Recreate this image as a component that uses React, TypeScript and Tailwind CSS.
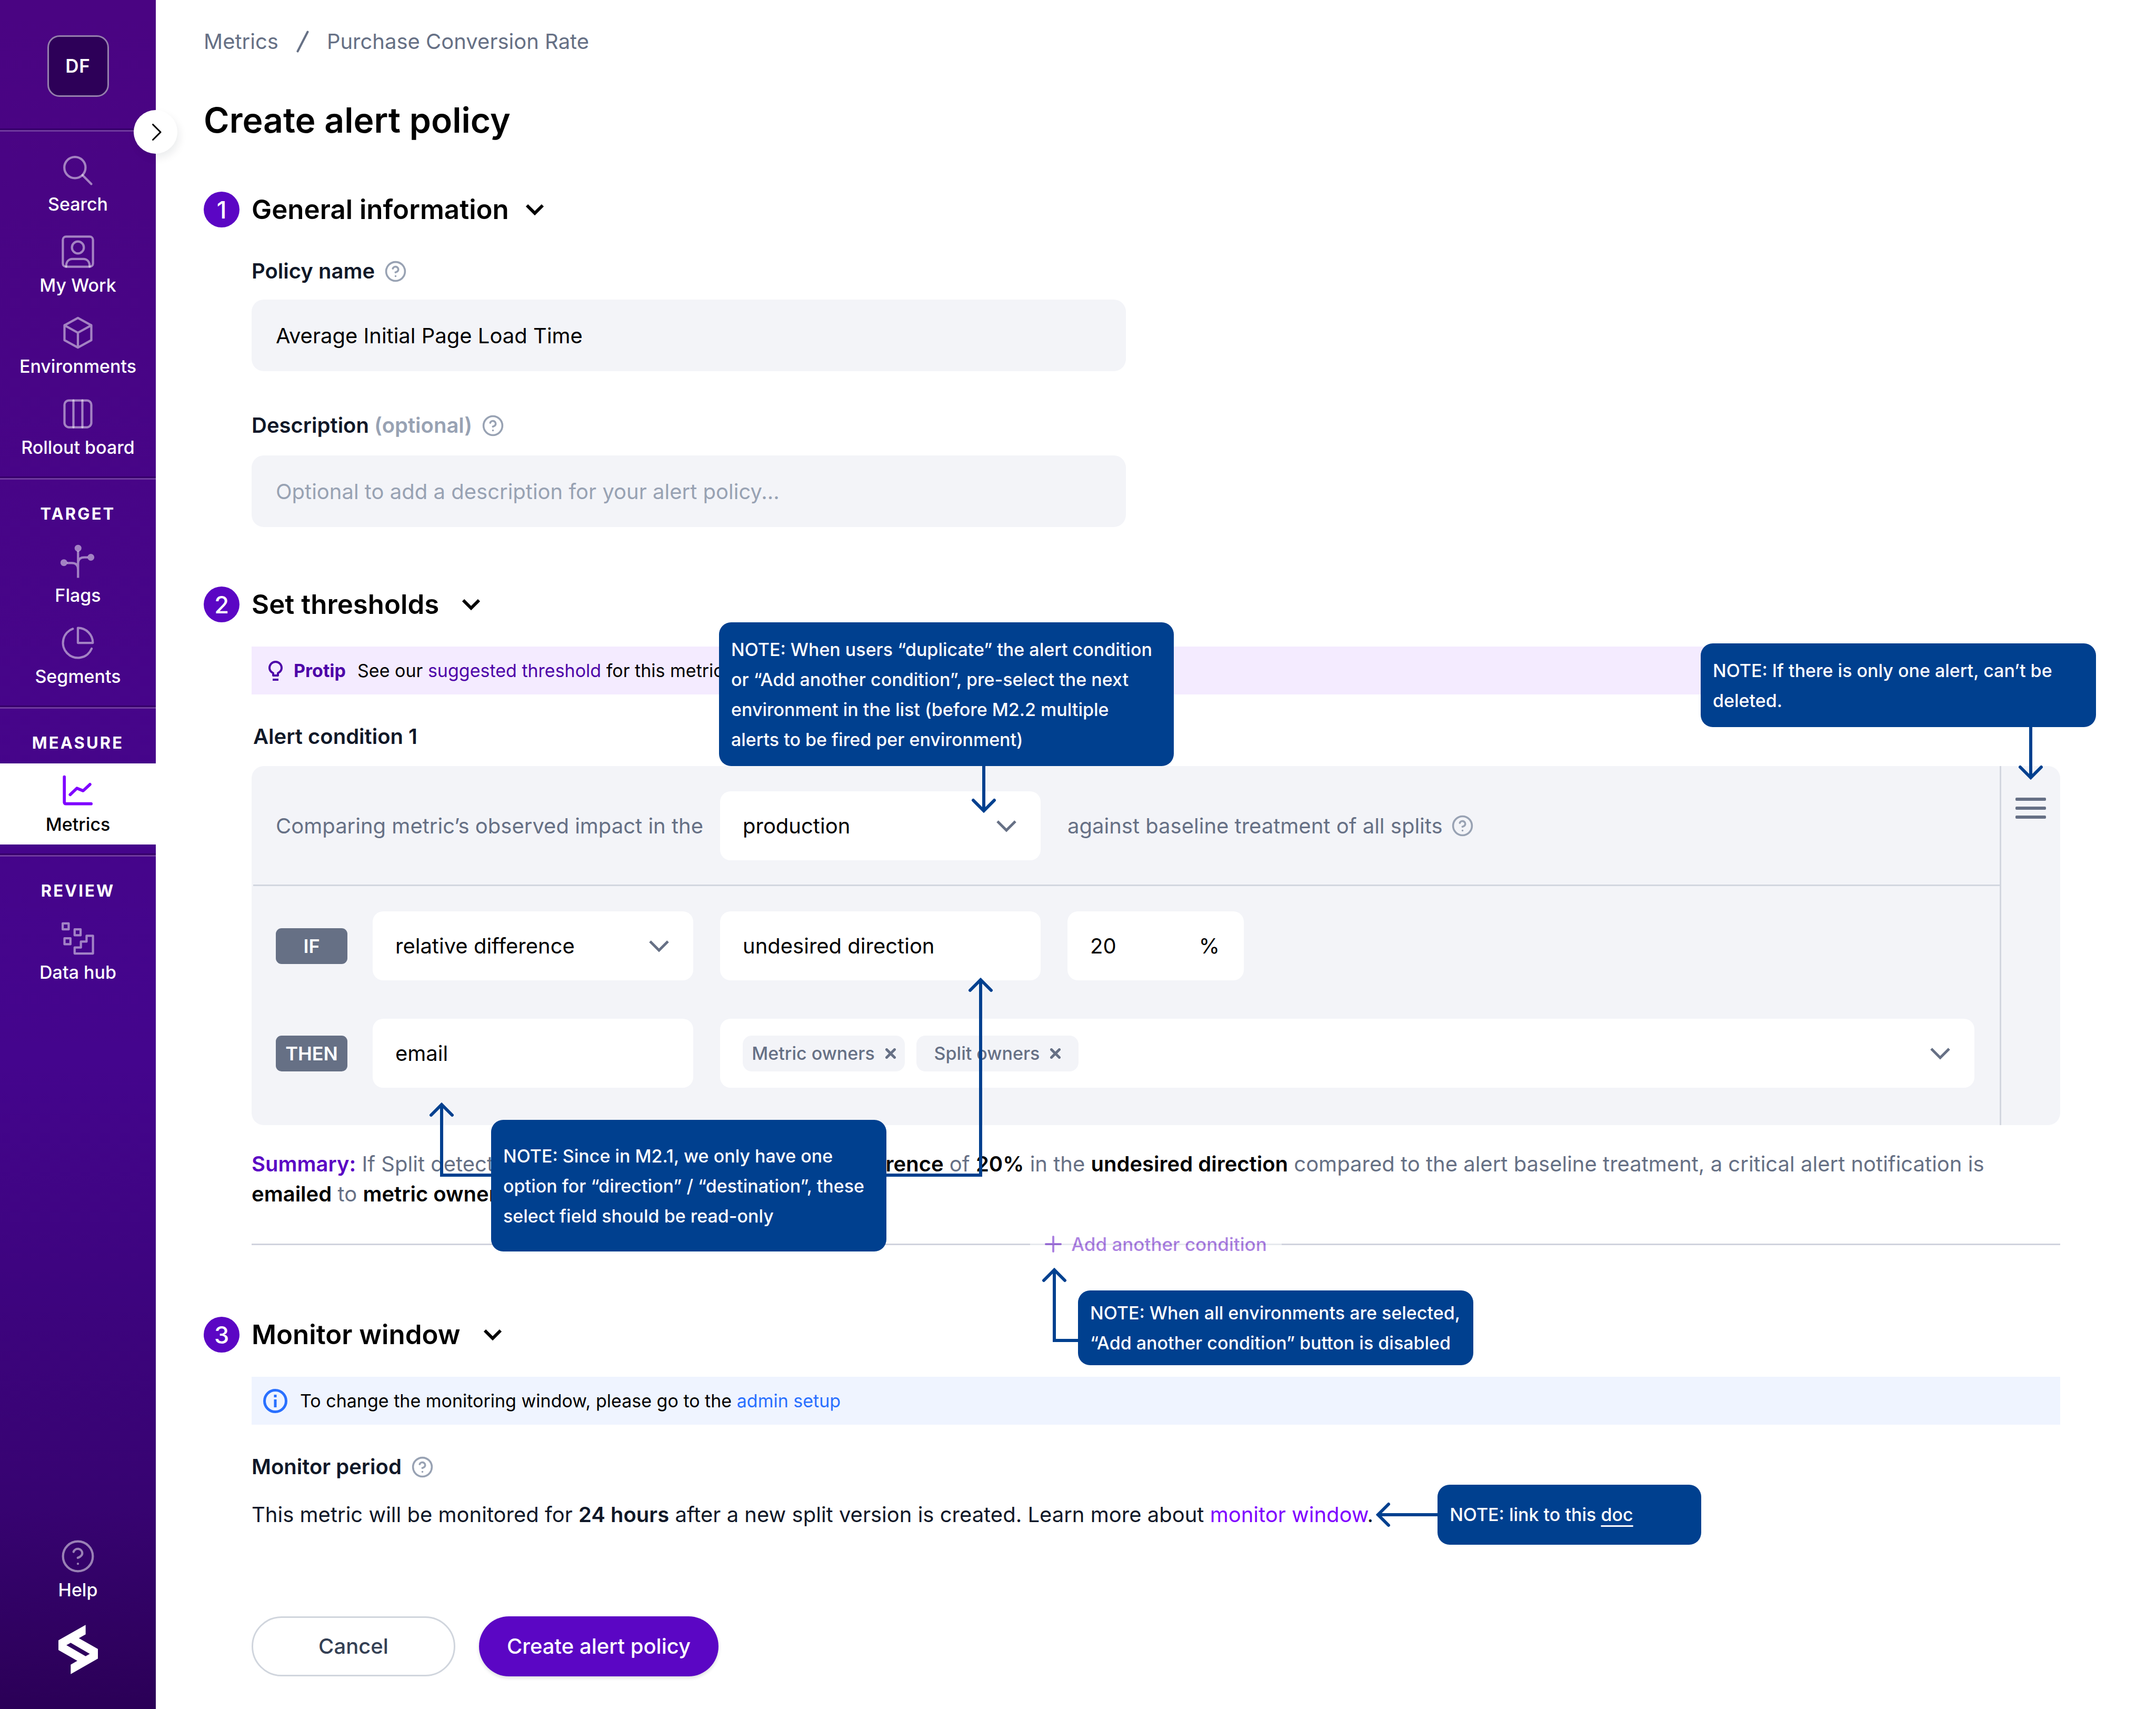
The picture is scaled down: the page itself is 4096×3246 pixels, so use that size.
import React, { ReactNode } from "react";

type IconProps = { className?: string };

function Line24({ className, width = 1.5, children }: IconProps & { width?: number; children: ReactNode }) {
  return (
    <svg
      viewBox="0 0 24 24"
      fill="none"
      stroke="currentColor"
      strokeWidth={width}
      strokeLinecap="round"
      strokeLinejoin="round"
      className={className}
      aria-hidden="true"
    >
      {children}
    </svg>
  );
}

const SearchIcon = () => (
  <Line24 className="size-[68px]">
    <circle cx="10" cy="10" r="7.1" />
    <path d="M15.1 15.1 21 21" />
  </Line24>
);

const WorkIcon = () => (
  <Line24 className="size-[68px]">
    <rect x="1.9" y="1.9" width="20.2" height="20.2" rx="2.2" />
    <circle cx="12" cy="9.2" r="4" />
    <path d="M4.1 22C4.1 19 5.6 16.9 8.4 16.9H15.6C18.4 16.9 19.9 19 19.9 22" />
  </Line24>
);

const CubeIcon = () => (
  <Line24 className="size-[68px]">
    <path d="M12 2.1 21 7V17L12 21.9 3 17V7ZM3 7 12 12 21 7M12 12V21.9" />
  </Line24>
);

const BoardIcon = () => (
  <Line24 className="size-[68px]">
    <rect x="3" y="3" width="18" height="18" rx="3" />
    <path d="M9 3V21M15 3V21" />
  </Line24>
);

const FlagsIcon = () => (
  <Line24 className="size-[68px]">
    <g fill="currentColor" stroke="none">
      <circle cx="12.1" cy="2.9" r="2.3" />
      <circle cx="2.6" cy="12.6" r="2.3" />
      <circle cx="20.7" cy="9" r="2.3" />
    </g>
    <path strokeLinecap="butt" d="M12.1 4.8V22.8M4.6 12.8H8C10.6 12.8 12.1 14.2 12.1 17M18.6 9H16.4C13.7 9 12.1 10.3 12.1 13" />
  </Line24>
);

const PieIcon = () => (
  <Line24 className="size-[68px]">
    <path d="M21.21 15.89A10 10 0 1 1 8.6 2.6" />
    <path d="M22 12A10 10 0 0 0 12 2V12Z" />
  </Line24>
);

const ChartIcon = () => (
  <Line24 className="size-[68px]" width={2}>
    <path d="M2.9 2.7V19.6Q2.9 20.7 4 20.7H20.9M6.8 14.6 11.3 10.3 15.5 12 20.1 7.7" />
  </Line24>
);

const DataIcon = () => (
  <Line24 className="size-[68px]">
    <rect x="1.8" y="1.7" width="4" height="4" />
    <rect x="9.8" y="5.7" width="4" height="4" />
    <rect x="3" y="11.7" width="4" height="4" />
    <path d="M9.8 21.9V17.9H14V13.9H17.8V10H22.1V21.9Z" />
  </Line24>
);

function QuestionMark({ className, width }: IconProps & { width?: number }) {
  return (
    <Line24 className={className} width={width}>
      <circle cx="12" cy="12" r="10" />
      <path d="M9.09 9a3 3 0 0 1 5.83 1c0 2-3 3-3 3M12 17h.01" />
    </Line24>
  );
}

function Logo() {
  return (
    <svg viewBox="343 765 238 297" className="h-[94px] w-[75px]" fill="#fff" fillRule="evenodd" role="img" aria-label="Split">
      <path d="M507 765V822L466 845 581 910V968L417 1062V1005L457 982 343 917V858ZM391 887 507 954 532 940 417 873Z" />
    </svg>
  );
}

type Item = { label: string; icon: ReactNode; active?: boolean };

function NavItem({ label, icon, active }: Item) {
  return (
    <a
      href="#"
      aria-current={active ? "page" : undefined}
      className={
        active
          ? "flex h-[154px] flex-col items-center gap-[6px] bg-white pt-[18px] text-black"
          : "flex h-[154px] flex-col items-center gap-[6px] pt-[18px] text-white"
      }
    >
      <span className={active ? "text-[#7f00ff]" : "text-white/50"}>{icon}</span>
      <span className="text-[34px] leading-[48px] font-medium whitespace-nowrap">{label}</span>
    </a>
  );
}

const Divider = () => <div className="h-[6px] border-t-[3px] border-b-[3px] border-t-[#36006a] border-b-[#6f3a9e]" />;

function NavGroup({ title, items }: { title: string; items: Item[] }) {
  return (
    <>
      <Divider />
      <div className="pb-[17px]">
        <h2 className="pt-[45px] pb-[19px] text-center text-[31px] leading-[40px] font-bold tracking-widest text-white">{title}</h2>
        {items.map((i) => (
          <NavItem key={i.label} {...i} />
        ))}
      </div>
    </>
  );
}

function Sidebar() {
  return (
    <aside className="relative flex w-[296px] shrink-0 flex-col bg-[linear-gradient(180deg,#4a0482_0%,#44058d_62%,#370371_88%,#2b0057_100%)]">
      <div className="flex h-[244px] justify-center pt-[67px]">
        <button className="flex size-[117px] items-center justify-center rounded-[23px] border-[3px] border-[#957fac] bg-[#2d0058] text-[35px] font-semibold tracking-wide text-white">
          DF
        </button>
      </div>
      <Divider />
      <button
        aria-label="Expand navigation"
        className="absolute top-[209px] -right-[41px] z-10 flex size-[83px] items-center justify-center rounded-full bg-white shadow-[4px_8px_16px_rgba(16,24,40,0.08)]"
      >
        <svg viewBox="0 0 18 32" className="ml-[4px] h-[32px] w-[18px]" fill="none" stroke="#000" strokeWidth="3" strokeLinecap="round" strokeLinejoin="round">
          <path d="M1.500 1.500 16 16 1.500 30.500" />
        </svg>
      </button>
      <nav className="flex flex-col">
        <div className="pt-[22px] pb-[17px]">
          <NavItem label="Search" icon={<SearchIcon />} />
          <NavItem label="My Work" icon={<WorkIcon />} />
          <NavItem label="Environments" icon={<CubeIcon />} />
          <NavItem label="Rollout board" icon={<BoardIcon />} />
        </div>
        <NavGroup
          title="TARGET"
          items={[
            { label: "Flags", icon: <FlagsIcon /> },
            { label: "Segments", icon: <PieIcon /> },
          ]}
        />
        <NavGroup title="MEASURE" items={[{ label: "Metrics", icon: <ChartIcon />, active: true }]} />
        <NavGroup title="REVIEW" items={[{ label: "Data hub", icon: <DataIcon /> }]} />
      </nav>
      <div className="mt-auto flex flex-col items-center gap-[28px] pb-[66px]">
        <NavItem label="Help" icon={<QuestionMark className="size-[68px]" />} />
        <Logo />
      </div>
    </aside>
  );
}

function Chevron({ className }: IconProps) {
  return (
    <svg viewBox="0 0 38 24" className={className} fill="none" stroke="currentColor" strokeWidth="5" aria-hidden="true">
      <path d="M2 3 19 20 36 3" />
    </svg>
  );
}

function StepHeading({ step, title, wide }: { step: number; title: string; wide?: boolean }) {
  return (
    <div className="flex h-[68px] items-center">
      <span className="mr-[23px] flex size-[68px] items-center justify-center rounded-full bg-[#5b06c4] text-[45px] leading-none font-medium text-white">
        {step}
      </span>
      <button className={wide ? "flex items-center gap-[44px]" : "flex items-center gap-[32px]"}>
        <h2 className="text-[51px] leading-[64px] font-semibold">{title}</h2>
        <svg viewBox="0 0 34 22" className="h-[22px] w-[34px]" fill="none" stroke="#000" strokeWidth="6" aria-hidden="true">
          <path d="M2 3 17 18 32 3" />
        </svg>
      </button>
    </div>
  );
}

function HelpButton({ label }: { label: string }) {
  return (
    <button aria-label={label} className="text-[#98a2b3]">
      <QuestionMark className="size-[43px]" width={2} />
    </button>
  );
}

function SelectBox({ label, value }: { label: string; value: string }) {
  return (
    <div className="relative w-[609px] text-[#667085]">
      <select aria-label={label} defaultValue={value} className="h-[131px] w-full appearance-none rounded-[20px] bg-white px-[43px] text-[40px] text-black">
        <option>{value}</option>
      </select>
      <Chevron className="pointer-events-none absolute top-[54px] right-[46px] h-[24px] w-[38px]" />
    </div>
  );
}

function ReadOnlyBox({ label, value }: { label: string; value: string }) {
  return (
    <input aria-label={label} readOnly value={value} className="h-[131px] w-[609px] rounded-[20px] bg-white px-[43px] text-[40px] text-black" />
  );
}

function Badge({ children }: { children: ReactNode }) {
  return (
    <span className="mr-[48px] flex h-[68px] w-[136px] items-center justify-center rounded-[11px] bg-[#667085] text-[36px] leading-none font-semibold text-white">
      {children}
    </span>
  );
}

function Chip({ children }: { children: string }) {
  return (
    <span className="flex h-[68px] w-[308px] items-center justify-center gap-[20px] rounded-[17px] bg-[#f3f4f8] text-[34px] font-medium whitespace-nowrap">
      {children}
      <button aria-label={"Remove " + children}>
        <svg viewBox="0 0 20 20" className="size-[20px]" fill="none" stroke="currentColor" strokeWidth="5" strokeLinecap="round">
          <path d="M2.500 2.500 17.500 17.500M17.500 2.500 2.500 17.500" />
        </svg>
      </button>
    </span>
  );
}

function Note({ className, children }: { className: string; children: ReactNode }) {
  return (
    <div role="note" className={"flex items-center rounded-[23px] bg-[#00408f] px-[23px] text-[34px] leading-[57px] font-medium text-white " + className}>
      <p>{children}</p>
    </div>
  );
}

function Arrow({ className, width, height, d }: { className: string; width: number; height: number; d: string }) {
  return (
    <svg
      viewBox={`0 0 ${width} ${height}`}
      width={width}
      height={height}
      className={className}
      fill="none"
      stroke="#00408f"
      strokeWidth="6"
      strokeLinejoin="miter"
      aria-hidden="true"
    >
      <path d={d} strokeLinecap="round" />
    </svg>
  );
}

function GeneralInformation() {
  return (
    <section className="mt-[96px]">
      <StepHeading step={1} title="General information" />
      <div className="ml-[91px] flex max-w-[1661px] flex-col">
        <div className="mt-[55px] flex items-center gap-[18px] text-[40px] leading-[56px] font-semibold text-[#101828]">
          <label htmlFor="policy-name">Policy name</label>
          <HelpButton label="About the policy name" />
        </div>
        <input
          id="policy-name"
          defaultValue="Average Initial Page Load Time"
          className="mt-[26px] h-[136px] rounded-[23px] bg-[#f3f4f8] px-[46px] text-[40px] text-black"
        />
        <div className="mt-[75px] flex items-center gap-[18px] text-[40px] leading-[56px] font-semibold text-[#101828]">
          <label htmlFor="policy-description">
            Description <span className="text-[#98a2b3]">(optional)</span>
          </label>
          <HelpButton label="About the description" />
        </div>
        <input
          id="policy-description"
          placeholder="Optional to add a description for your alert policy..."
          className="mt-[29px] h-[136px] rounded-[23px] bg-[#f3f4f8] px-[46px] text-[40px] text-black placeholder:text-[#98a2b3]"
        />
      </div>
    </section>
  );
}

function ConditionPanel() {
  return (
    <div className="mt-[28px] flex overflow-hidden rounded-[23px] bg-[#f3f4f8] text-[40px] text-[#667085]">
      <div className="flex-1">
        <div className="ml-[3px] flex items-center border-b-[3px] border-[#d2d6df] pt-[48px] pb-[46px] pl-[43px]">
          <span className="w-[844px] whitespace-nowrap">Comparing metric’s observed impact in the</span>
          <SelectBox label="Environment" value="production" />
          <span className="mr-[16px] ml-[51px] whitespace-nowrap">against baseline treatment of all splits</span>
          <HelpButton label="About the baseline treatment" />
        </div>
        <div className="flex items-center pt-[48px] pl-[46px]">
          <Badge>IF</Badge>
          <div className="flex gap-[51px]">
            <SelectBox label="Difference type" value="relative difference" />
            <ReadOnlyBox label="Direction" value="undesired direction" />
            <label className="flex h-[131px] w-[335px] items-center rounded-[20px] bg-white pr-[46px] pl-[43px] text-black">
              <input aria-label="Threshold percent" defaultValue="20" className="w-0 flex-1 bg-transparent" />
              <span>%</span>
            </label>
          </div>
        </div>
        <div className="flex items-center pt-[73px] pr-[48px] pb-[71px] pl-[46px]">
          <Badge>THEN</Badge>
          <div className="flex flex-1 gap-[51px]">
            <ReadOnlyBox label="Destination" value="email" />
            <div className="flex h-[131px] flex-1 items-center gap-[22px] rounded-[20px] bg-white pr-[46px] pl-[43px]">
              <Chip>Metric owners</Chip>
              <Chip>Split owners</Chip>
              <button aria-label="Choose recipients" className="ml-auto">
                <Chevron className="h-[24px] w-[38px]" />
              </button>
            </div>
          </div>
        </div>
      </div>
      <div className="flex w-[115px] justify-center border-l-[3px] border-[#d2d6df] pt-[60px]">
        <button aria-label="Condition menu" className="flex h-[40px] w-[58px] flex-col gap-[11px]">
          <span className="h-[6px] w-full rounded-[2px] bg-[#667085]" />
          <span className="h-[6px] w-full rounded-[2px] bg-[#667085]" />
          <span className="h-[6px] w-full rounded-[2px] bg-[#667085]" />
        </button>
      </div>
    </div>
  );
}

function Thresholds() {
  return (
    <section className="mt-[113px]">
      <StepHeading step={2} title="Set thresholds" wide />
      <div className="relative mt-[46px] ml-[91px]">
        <div className="flex h-[91px] items-center bg-[#f4ebff] pl-[32px] text-[34px] text-black">
          <svg viewBox="0 0 27 38" className="mr-[21px] h-[38px] w-[27px]" fill="none" stroke="#4d03a8" strokeWidth="4" strokeLinejoin="round" aria-hidden="true">
            <path d="M9 28V23.500C5 21.500 2 17.500 2 13.500A11.500 11.500 0 0 1 25 13.500C25 17.500 22 21.500 18 23.500V28Z" />
            <path d="M8 36H19" />
          </svg>
          <strong className="mr-[22px] font-bold text-[#4d03a8]">Protip</strong>
          <p>
            See our{" "}
            <a href="#" className="text-[#4d03a8]">
              suggested threshold
            </a>{" "}
            for this metric
          </p>
        </div>
        <h3 className="mt-[52px] ml-[3px] text-[40px] leading-[56px] font-semibold text-[#101828]">Alert condition 1</h3>
        <ConditionPanel />
        <p className="mt-[45px] pr-[60px] text-[40px] leading-[57px] text-[#667085]">
          <strong className="font-semibold text-[#5b06c4]">Summary:</strong> If Split detects an impact greater than a{" "}
          <strong className="font-semibold text-black">relative difference</strong> of <strong className="font-semibold text-black">20%</strong> in the{" "}
          <strong className="font-semibold text-black">undesired direction</strong> compared to the alert baseline treatment, a critical alert notification is{" "}
          <strong className="font-semibold text-black">emailed</strong> to <strong className="font-semibold text-black">metric owners</strong> and{" "}
          <strong className="font-semibold text-black">split owners</strong>.
        </p>
        <div className="mt-[33px] grid items-center justify-items-center">
          <div className="col-start-1 row-start-1 h-[3px] w-full bg-[#d0d3de]" />
          <button
            disabled
            className="col-start-1 row-start-1 flex h-[68px] w-[478px] items-center justify-center gap-[18px] bg-white text-[35px] font-medium text-[#5b06c4] opacity-50"
          >
            <svg viewBox="0 0 32 32" className="size-[32px]" fill="none" stroke="currentColor" strokeWidth="4" strokeLinecap="round" aria-hidden="true">
              <path d="M16 2V30M2 16H30" />
            </svg>
            Add another condition
          </button>
        </div>

        <Arrow className="absolute top-[227px] left-[1367px]" width={48} height={92} d="M24 0V85M4 65 24 85 44 65" />
        <Note className="absolute -top-[46px] left-[888px] h-[273px] w-[864px] pr-[32px]">
          NOTE: When users “duplicate” the alert condition or “Add another condition”, pre-select the next environment in the list (before M2.2 multiple
          alerts to be fired per environment)
        </Note>
        <Arrow className="absolute top-[153px] right-[32px]" width={48} height={104} d="M24 0V96M4 76 24 96 44 76" />
        <Note className="absolute -top-[6px] -right-[68px] h-[159px] w-[751px]">NOTE: If there is only one alert, can’t be deleted.</Note>
        <Arrow className="absolute top-[863px] left-[337px]" width={120} height={146} d="M4 27 24 7 44 27M24 7V141H118" />
        <Arrow className="absolute top-[626px] left-[1204px]" width={205} height={384} d="M0 378H181V7M161 27 181 7 201 27" />
        <Note className="absolute top-[899px] left-[455px] h-[250px] w-[751px]">
          NOTE: Since in M2.1, we only have one option for “direction” / “destination”, these select field should be read-only
        </Note>
        <Arrow className="absolute top-[1177px] left-[1501px]" width={72} height={146} d="M4 27 24 7 44 27M24 7V141H70" />
        <Note className="absolute top-[1223px] left-[1570px] h-[142px] w-[751px]">
          NOTE: When all environments are selected, “Add another condition” button is disabled
        </Note>
      </div>
    </section>
  );
}

function MonitorWindow() {
  return (
    <section className="mt-[104px]">
      <StepHeading step={3} title="Monitor window" wide />
      <div className="mt-[46px] ml-[91px]">
        <div className="flex h-[91px] items-center gap-[24px] bg-[#eff4ff] pl-[22px] text-[34px] text-black">
          <svg viewBox="0 0 46 46" className="size-[46px]" fill="none" stroke="#2970ff" strokeWidth="5" aria-hidden="true">
            <circle cx="23" cy="23" r="20.500" />
            <path d="M23 20V35M23 11V16" />
          </svg>
          <p>
            To change the monitoring window, please go to the{" "}
            <a href="#" className="text-[#2970ff]">
              admin setup
            </a>
          </p>
        </div>
        <div className="mt-[52px] flex items-center gap-[18px] text-[40px] leading-[56px] font-semibold text-[#101828]">
          <h3>Monitor period</h3>
          <HelpButton label="About the monitor period" />
        </div>
        <div className="mt-[34px] flex h-[57px] items-center text-[40px] leading-[57px] text-[#101828]">
          <p>
            This metric will be monitored for <strong className="font-semibold">24 hours</strong> after a new split version is created. Learn more about{" "}
            <a href="#" className="text-[#7f00ff]">
              monitor window
            </a>
            .
          </p>
          <Arrow className="ml-[4px] shrink-0" width={118} height={48} d="M118 24H5M25 4 5 24 25 44" />
          <Note className="h-[114px] w-[501px]">
            NOTE: link to this{" "}
            <a href="#" className="underline decoration-[3px] underline-offset-[8px]">
              doc
            </a>
          </Note>
        </div>
        <div className="mt-[165px] flex gap-[45px] text-[40px] font-medium">
          <button className="h-[114px] w-[387px] rounded-full border-[3px] border-[#d0d5dd] bg-white text-[#344054]">Cancel</button>
          <button className="h-[114px] w-[455px] rounded-full bg-[#5b06c4] text-white shadow-[0_3px_6px_rgba(16,24,40,0.15)]">Create alert policy</button>
        </div>
      </div>
    </section>
  );
}

export default function App() {
  return (
    <div className="flex min-h-screen bg-white font-['Inter',sans-serif] text-black">
      <Sidebar />
      <main className="min-w-0 flex-1 pt-[51px] pr-[182px] pb-[60px] pl-[91px]">
        <nav aria-label="Breadcrumb" className="flex items-center text-[40px] leading-[56px] text-[#667085]">
          <a href="#">Metrics</a>
          <svg viewBox="0 0 24 42" className="mx-[34px] h-[42px] w-[24px]" fill="none" stroke="currentColor" strokeWidth="4" strokeLinecap="round" aria-hidden="true">
            <path d="M2.500 39.500 21.500 2.500" />
          </svg>
          <a href="#">Purchase Conversion Rate</a>
        </nav>
        <h1 className="mt-[81px] text-[66px] leading-[80px] font-semibold">Create alert policy</h1>
        <GeneralInformation />
        <Thresholds />
        <MonitorWindow />
      </main>
    </div>
  );
}
